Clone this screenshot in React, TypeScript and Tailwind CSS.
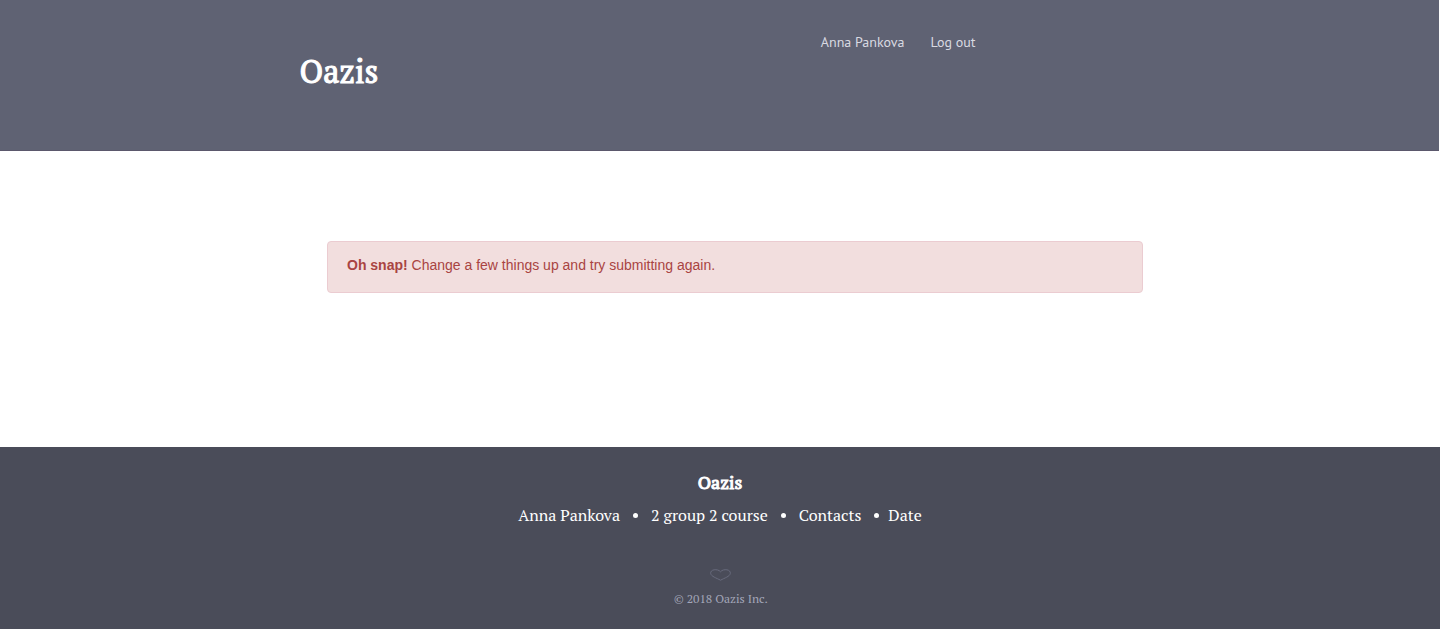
const footerLinks = [
  { label: 'Anna Pankova', gap: 'pr-[13px]' },
  { label: '2 group 2 course', gap: 'px-[13px]' },
  { label: 'Contacts', gap: 'px-[13px]' },
  { label: 'Date', gap: 'pl-[9px]' },
];

function Header() {
  return (
    <header className="mr-px border-b border-[#5b586c] bg-[#5f6273] pt-8 pb-14">
      <div className="mx-auto flex max-w-[840px] items-start justify-between">
        <h1 className="pt-4 font-['PT_Serif','Liberation_Serif',serif] text-[32px] leading-[46px] font-normal text-white [-webkit-text-stroke:1px_white]">
          <a href="#home">Oazis</a>
        </h1>
        <nav
          aria-label="Account"
          className="flex gap-[26px] pr-[164px] font-['PT_Sans',Lato,sans-serif] text-sm text-[#d9dae2]"
        >
          <a href="#profile">Anna Pankova</a>
          <a href="#logout">Log out</a>
        </nav>
      </div>
    </header>
  );
}

function Alert() {
  return (
    <div
      role="alert"
      className="ml-[27px] -mr-[3px] rounded border border-[#ebccd1] bg-[#f2dede] px-[19px] pt-[13px] pb-[17px] font-['Liberation_Sans',Arial,sans-serif] text-sm text-[#a94442]"
    >
      <strong className="font-bold">Oh snap!</strong> Change a few things up and try submitting again.
    </div>
  );
}

function Footer() {
  return (
    <footer className="flex flex-col items-center bg-[#4a4c59] pt-[23px] pb-5 font-['PT_Serif','Liberation_Serif',serif] text-white">
      <h2 className="text-lg leading-6 font-normal [-webkit-text-stroke:1px_white]">Oazis</h2>
      <ul className="mt-[9px] flex text-base">
        {footerLinks.map((link, index) => (
          <li key={link.label} className="flex items-center">
            {index > 0 && <span aria-hidden="true" className="size-[5px] rounded-full bg-white" />}
            <a href="#info" className={link.gap}>{link.label}</a>
          </li>
        ))}
      </ul>
      <div className="mt-[42px] flex flex-col items-center pl-0.5">
        <svg
          className="h-3 w-[22px]"
          viewBox="0 0 22 12"
          fill="none"
          stroke="#686b7d"
          strokeWidth="1"
          aria-hidden="true"
        >
          <path d="M10.5 2.8C9 .9 6.4 .5 4.1 .8C1.8 1.1 .4 2.7 .7 4.5C1.1 7.4 6.4 9 10.5 11.2C14.6 9 19.9 7.4 20.3 4.5C20.6 2.7 19.2 1.1 16.9 .8C14.6 .5 12 .9 10.5 2.8Z" />
        </svg>
        <p className="mt-2 text-xs leading-5 text-[#a3a6b8]">© 2018 Oazis Inc.</p>
      </div>
    </footer>
  );
}

export default function App() {
  return (
    <div className="flex min-h-screen flex-col bg-white">
      <Header />
      <main className="mx-auto w-full max-w-[840px] flex-1 pt-[90px] pb-16">
        <Alert />
      </main>
      <Footer />
    </div>
  );
}
